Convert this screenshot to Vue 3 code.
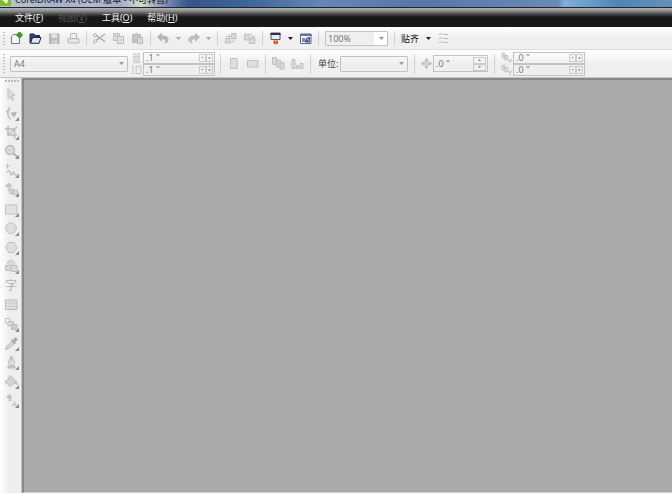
<script setup>
import { ref, h } from 'vue'

const menus = [
  { text: '文件', key: 'F' },
  { text: '视图', key: 'V', off: true },
  { text: '工具', key: 'O' },
  { text: '帮助', key: 'H' }
]

const L = 'fill:none;stroke:#c0c0c0'
const F = 'fill:#d9d9d9;stroke:#c0c0c0'
const S = 'fill:#c4c4c4;stroke:none'
const shapes = {
  new: [['M2.500 5.500l2-2h6v9h-8z', 'fill:#f7f8fc;stroke:#6d738c'], ['M10.500 1v6M7.500 4h6', 'fill:none;stroke:#3f9a1c;stroke-width:2.400'], ['M8.500 2h4v4h-4z', 'fill:#3f9a1c']],
  open: [['M2 12V3h4l1 1.500h4.500V6', 'fill:#39426a;stroke:#1d2547'], ['M2.500 12.300L4.500 6.500h8.500l-2 5.800z', 'fill:#dfe4f4;stroke:#1d2547']],
  save: [['M2.500 3h9.500v9.500H2.500z', 'fill:#bcbcbc;stroke:#b5b5b5'], ['M4.500 3h5.500v4H4.500z', 'fill:#e2e2e2'], ['M5 9.500h5v3H5z', 'fill:#dedede'], ['M6 10h1.500v2.500H6z', S]],
  print: [['M4.500 7V2.500h6V7', 'fill:#eee;stroke:#bdbdbd'], ['M2 7.500h11v4.500H2z', F], ['M3 10h9', 'stroke:#f5f5f5']],
  cut: [['M4 4.500l9 6M4 9.500L13 3', 'fill:none;stroke:#a9a9a9;stroke-width:1.500'], ['M3 2.500a1.600 1.600 0 1 0 .1 0M3 8.800a1.600 1.600 0 1 0 .1 0', 'fill:#eee;stroke:#a9a9a9']],
  copy: [['M2.500 2.500h6v7h-6z', F], ['M6.500 5.500h6v7h-6z', 'fill:#eee;stroke:#b8b8b8'], ['M8 8h3M8 10h3M4 5h2', 'stroke:#bbb']],
  paste: [['M2.500 3.500h8v8h-8z', 'fill:#c4c4c4;stroke:#b8b8b8'], ['M5 2h3v2H5z', S], ['M7.500 6.500h5v6h-5z', 'fill:#e2e2e2;stroke:#b5b5b5'], ['M9 8.500h2M9 10.500h2', 'stroke:#bbb']],
  undo: [['M1 6l5-4.500v3c4 0 7.500 2 6.500 5-.5 1.800-2.500 3-4.500 3.500 2-2 2-4.700-2-4.700v2.700z', 'fill:#b5b5b5']],
  redo: [['M14 6L9 1.500v3C5 4.500 1.500 6.500 2.500 9.500c.5 1.800 2.500 3 4.500 3.500-2-2-2-4.700 2-4.700v2.700z', 'fill:#bdbdbd']],
  import: [['M2.500 7.500h4.500v4.500H2.500z', F], ['M8.500 2.500h4.500v5H8.500z', F], ['M3 5.500h4M5.500 3.500l2 2-2 2M7 11h4V8', L]],
  export: [['M7.500 7.500h5.500v5H7.500z', F], ['M2.500 6V3h3l2 2v4h-5z', F], ['M6 3.500c3-1 5 0 5 3M9 5l2 2 2-2', L]],
  launch: [['M3 2h9v6.500H3z', 'fill:#e9ebf2;stroke:#555b76'], ['M2.500 2h10v2H2.500z', 'fill:#2a3050'], ['M5.500 9.500h4.500v2l-1 2-1.300-1L6.500 13.500l-1-2z', 'fill:#ef3b16'], ['M7 9h1.500v2.500H7z', 'fill:#ffb03b']],
  welcome: [['M2.500 3h10.500v9.500H2.500z', 'fill:#fff;stroke:#5a628a'], ['M2 3h11.500v2H2z', 'fill:#6370a0'], ['M4 7h3.500v4H4z', 'fill:#7d8cc0'], ['M7 10.500l1.500-4L12 6v5.500H7z', 'fill:#46549a'], ['M9 7.500l1.500 2', 'stroke:#fff']],
  options: [['M3 3l1 1 2-2M3 7l1 1 2-2M3 11l1 1 2-2', 'fill:none;stroke:#b8b8b8'], ['M7 3.500h5M7 7.500h5M7 11.500h5', 'stroke:#b8b8b8']],
  portrait: [['M4.500 2.500h6.500v10H4.500z', 'fill:#e0e0e0;stroke:#c0c0c0']],
  landscape: [['M2.500 4.500h10.500v6.500H2.500z', 'fill:#e0e0e0;stroke:#c0c0c0']],
  pages: [['M1.500 1.500h4v7h-4z', F], ['M5.500 4h4v7h-4z', F], ['M9 6.500h4v6.500H9z', F]],
  current: [['M2 3.500h3v9H2z', F], ['M6.500 9.500h2v3h-2z', F], ['M10 7.500h3v5h-3z', F]],
  nudge: [['M7.500 1.500l2 2.500h-4zM7.500 13.500l2-2.500h-4zM1.500 7.500l2.500-2v4zM13.500 7.500l-2.500-2v4z', 'fill:#ccc;stroke:#b0b0b0;stroke-width:.7'], ['M5.500 5.500h4v4h-4z', F]],
  dupx: [['M2 1.500h3.500v6H2z', F], ['M5.500 4.500h3.500v5.500h-3.500z', F], ['M10 9l4 4M14 9l-4 4', 'stroke:#aaa']],
  dupy: [['M2 1.500h3.500v6H2z', F], ['M5.500 4.500h3.500v5.500h-3.500z', F], ['M10 8.500l2 2.500 2-2.500M12 11v3', 'fill:none;stroke:#aaa']],
  width: [['M4 5h7v8H4z', 'fill:#ddd;stroke:#c0c0c0'], ['M4 2.500h7M4 1v3M11 1v3', L]],
  height: [['M7 3h6v9H7z', 'fill:#eee;stroke:#bdbdbd'], ['M3 3v9M1 3h4M1 12h4', L]],
  pick: [['M4 1.500v10l2.300-2 2 4 1.500-.8L8 8.500h3z', 'fill:#dedede;stroke:#bfbfbf']],
  shape: [['M6 1C2.500 5 3 9 6.500 13.500M2 6l4-2', 'fill:none;stroke:#bbb;stroke-width:1.300'], ['M6 7l7-1.500-2.500 6z', 'fill:#b5b5b5']],
  crop: [['M4 1v9h9M1 4h9.500v9M3.500 10.500L13 2', 'fill:none;stroke:#bbb;stroke-width:1.500']],
  zoom: [['M6 1.500a4.500 4.500 0 1 0 .1 0', 'fill:#dcdcdc;stroke:#b8b8b8;stroke-width:1.300'], ['M9.500 9.500l4 3.500', 'stroke:#b0b0b0;stroke-width:2'], ['M4 6h4', 'stroke:#c5c5c5']],
  freehand: [['M3.500 .5v5M1 3h5', L], ['M3 9.500c2-3 3-1 3.500 1s1.500 2 2 0 1.500-2 2 0 1.500 2 3 1', 'fill:none;stroke:#bbb;stroke-width:1.300']],
  smart: [['M1 4l4-3.500L8.500 4 4.500 6z', S], ['M3 8l3-2.500v3z', S], ['M5.500 7h4v4.500h-4zM8 8h5.500v4.500H8z', F]],
  rect: [['M1.500 3h11.500v9H1.500z', 'fill:#e1e1e1;stroke:#c0c0c0']],
  ellipse: [['M7 2a5.300 5.300 0 1 0 .1 0', 'fill:#dedede;stroke:#c0c0c0']],
  polygon: [['M4.500 2.500h5.500l3 5-3 5H4.500l-3-5z', 'fill:#dedede;stroke:#c0c0c0']],
  basic: [['M7 1a3.500 3.500 0 1 0 .1 0', F], ['M1.500 6.500h5v5h-5z', F], ['M7 12.500v-6h6v6z', F]],
  table: [['M1.500 3h11.500v9.500H1.500z', 'fill:#e2e2e2;stroke:#bababa'], ['M1.500 6h11.500M1.500 9.500h11.500M5.500 3v9M9 3v9', 'stroke:#cdcdcd']],
  blend: [['M1.500 1.500h4.500v4.500h-4.500z', L], ['M4 4.500h5.500v4.500H4z', F], ['M7.500 7.500h5.500v5h-5.500z', 'fill:#ccc;stroke:#bbb']],
  dropper: [['M1.500 13.500l1-3 5.500-5 2 2-5.500 5z', 'fill:#dadada;stroke:#b5b5b5'], ['M7 4l1-1 1 1 2.500-3 2.500 2.500L11 6l1 1-1.500 1.500z', 'fill:#a9a9a9']],
  outline: [['M7.500 1l3 5.500-1 4h-4l-1-4z', 'fill:#e3e3e3;stroke:#b8b8b8'], ['M7.500 2v5M4 11h7v2H4z', 'fill:#ccc;stroke:#b8b8b8']],
  fill: [['M1 8l6-5.500 5 5L6.500 12.500z', 'fill:#d6d6d6;stroke:#b8b8b8'], ['M5 6V2.500c1-1.500 2.500-.5 2.500 1', L], ['M11 6c2.500 1 2.500 2.500 2.500 5l-2.500-1z', S]],
  interactive: [['M2 3.500L5.500 1 8.500 5l-3 2z', S], ['M3.500 8l3-2 1.500 2z', S], ['M10.500 7.500l3 5.500H7.500z', 'fill:#cfcfcf']]
}

const Icon = (p) =>
  h('svg', { viewBox: '0 0 15 15', 'aria-hidden': 'true' }, shapes[p.name].map(([d, style]) => h('path', { d, style })))
Icon.props = ['name']

const toolbar = [
  { n: 'new', t: 'New' }, { n: 'open', t: 'Open' }, { n: 'save', t: 'Save' }, { n: 'print', t: 'Print' }, '|',
  { n: 'cut', t: 'Cut' }, { n: 'copy', t: 'Copy' }, { n: 'paste', t: 'Paste' }, '|',
  { n: 'undo', t: 'Undo', drop: true, off: true }, { n: 'redo', t: 'Redo', drop: true, off: true }, '|',
  { n: 'import', t: 'Import' }, { n: 'export', t: 'Export' }, '|',
  { n: 'launch', t: 'Application launcher', drop: true }, { n: 'welcome', t: 'Welcome screen' }, '|'
]

const toolGroups = [
  ['pick', 'shape', 'crop', 'zoom', 'freehand', 'smart'],
  ['rect', 'ellipse', 'polygon', 'basic', 'text', 'table'],
  ['blend', 'dropper', 'outline', 'fill', 'interactive']
]
const plain = ['pick', 'text', 'table']

const zoomLevel = ref('100%')
const paper = ref('A4')
const unit = ref('')
const pageW = ref('.1 "')
const pageH = ref('.1 "')
const nudge = ref('.0 "')
const dupX = ref('.0 "')
const dupY = ref('.0 "')
</script>

<template>
  <div class="app">
    <header class="title">
      <svg class="logo" viewBox="0 0 12 7" aria-hidden="true">
        <path d="M0 0h11v6H0z" fill="#7cbb2e" />
        <path d="M2 0l5 4 1-4z" fill="#f4f9ec" />
      </svg>
      <span>CorelDRAW X4 (OEM 版本 - 不可转售)</span>
    </header>

    <nav class="menu">
      <button v-for="m in menus" :key="m.text" type="button" :disabled="m.off">{{ m.text }}(<u>{{ m.key }}</u>)</button>
    </nav>

    <div class="bar standard">
      <i class="grip"></i>
      <template v-for="(b, i) in toolbar" :key="i">
        <i v-if="b === '|'" class="sep"></i>
        <template v-else>
          <button type="button" class="ico" :aria-label="b.t"><Icon :name="b.n" /></button>
          <button v-if="b.drop" type="button" class="drop" :class="{ off: b.off }" :aria-label="b.t + ' list'"></button>
        </template>
      </template>
      <label class="combo zoom">
        <select v-model="zoomLevel" aria-label="Zoom"><option>100%</option></select><i class="tri"></i>
      </label>
      <i class="sep"></i>
      <button type="button" class="snap">贴齐</button>
      <button type="button" class="drop" aria-label="Snap list"></button>
      <button type="button" class="ico" aria-label="Options"><Icon name="options" /></button>
    </div>

    <div class="bar property">
      <i class="grip"></i>
      <label class="combo paper">
        <select v-model="paper" aria-label="Paper"><option>A4</option></select><i class="tri"></i>
      </label>
      <div class="pair">
        <label class="field"><Icon name="width" /><span class="num"><input v-model="pageW" aria-label="Page width"><button type="button" class="down" aria-label="Less"></button><button type="button" class="up" aria-label="More"></button></span></label>
        <label class="field"><Icon name="height" /><span class="num"><input v-model="pageH" aria-label="Page height"><button type="button" class="down" aria-label="Less"></button><button type="button" class="up" aria-label="More"></button></span></label>
      </div>
      <i class="sep"></i>
      <button type="button" class="ico" aria-label="Portrait"><Icon name="portrait" /></button>
      <button type="button" class="ico" aria-label="Landscape"><Icon name="landscape" /></button>
      <i class="sep"></i>
      <button type="button" class="ico" aria-label="All pages"><Icon name="pages" /></button>
      <button type="button" class="ico" aria-label="Current page"><Icon name="current" /></button>
      <i class="sep"></i>
      <label class="unit" for="unit">单位:</label>
      <span class="combo units">
        <select id="unit" v-model="unit"><option></option></select><i class="tri"></i>
      </span>
      <i class="sep"></i>
      <label class="field nudge"><Icon name="nudge" /><span class="num tall"><input v-model="nudge" aria-label="Nudge"><span class="spin"><button type="button" class="up" aria-label="More"></button><button type="button" class="down" aria-label="Less"></button></span></span></label>
      <i class="sep"></i>
      <div class="pair">
        <label class="field"><Icon name="dupx" /><span class="num"><input v-model="dupX" aria-label="Duplicate x"><button type="button" class="down" aria-label="Less"></button><button type="button" class="up" aria-label="More"></button></span></label>
        <label class="field"><Icon name="dupy" /><span class="num"><input v-model="dupY" aria-label="Duplicate y"><button type="button" class="down" aria-label="Less"></button><button type="button" class="up" aria-label="More"></button></span></label>
      </div>
    </div>

    <div class="work">
      <aside class="tools">
        <i class="hgrip"></i>
        <div v-for="(g, i) in toolGroups" :key="i" class="group">
          <button v-for="t in g" :key="t" type="button" :class="{ fly: !plain.includes(t) }" :aria-label="t">
            <span v-if="t === 'text'" class="char">字</span>
            <Icon v-else :name="t" />
          </button>
        </div>
      </aside>
      <main class="canvas"></main>
    </div>
  </div>
</template>

<style>
body { margin: 0; background: #fff; }
</style>

<style scoped>
.app {
  display: flex;
  flex-direction: column;
  height: 100vh;
  box-sizing: border-box;
  padding-bottom: 3px;
  font-family: "Noto Sans", "Noto Sans CJK SC", sans-serif;
  font-size: 9px;
  color: #222;
}
button, input, select { font: inherit; color: inherit; margin: 0; padding: 0; border: 0; background: none; outline: 0; box-sizing: border-box; }
svg { display: block; width: 15px; height: 15px; flex: none; }

.title {
  display: flex;
  align-items: flex-end;
  gap: 3px;
  height: 7px;
  flex: none;
  overflow: hidden;
  border-bottom: 1px solid #20242c;
  background: linear-gradient(90deg, #b9c8c8 0, #a5b2cb 8%, #b2b8cf 14%, #a3acc6 18%, #d5dec4 21%, #8d99bd 24%, #35558b 28%, #3c6396 36%, #6487b5 48%, #5578a5 62%, #6c87b4 82%, #6c87b4 83%, #7fb0d8 84%, #4f86b4 92%, #6691b8 100%);
  color: #15181e;
  font-size: 9px;
  line-height: 10px;
}
.title .logo { width: 12px; height: 7px; }
.title span { white-space: nowrap; padding-bottom: 2px; }

.menu {
  display: flex;
  gap: 15px;
  height: 19px;
  flex: none;
  padding-left: 15px;
  background: linear-gradient(#b5b5b5 0, #8c8c8c 3px, #4a4a4a 6px, #181818 9px, #181818 100%);
  color: #f2f2f2;
}
.menu button { line-height: 19px; white-space: nowrap; }
.menu button:disabled { color: #555; }

.bar { display: flex; align-items: center; flex: none; box-sizing: border-box; background: linear-gradient(#fff, #efefef 50%, #efefef); }
.standard { height: 23px; padding-top: 1px; border-bottom: 1px solid #ddd; }
.property { height: 28px; border-bottom: 1px solid #c4c4c4; color: #777; }
.grip { width: 2px; height: 14px; margin: 0 2px 0 3px; background: repeating-linear-gradient(#bbb 0 1px, transparent 1px 3px); }
.property .grip { height: 20px; margin-right: 5px; }
.sep { width: 1px; height: 15px; margin: 0 3px; background: #d2d2d2; flex: none; }
.property .sep { height: 20px; }
.ico { display: grid; place-items: center; width: 19px; height: 19px; flex: none; }
.drop { width: 11px; height: 19px; display: grid; place-items: center; flex: none; }
.drop::before, .tri { content: ""; width: 5px; height: 3px; background: #222; clip-path: polygon(0 0, 100% 0, 50% 100%); }
.drop.off::before { background: #aaa; }
.snap { padding-left: 3px; width: 25px; text-align: left; white-space: nowrap; flex: none; color: #111; }

.combo { display: grid; grid-template-columns: 1fr 11px; align-items: center; justify-items: center; height: 16px; box-sizing: border-box; border: 1px solid #c2c2c2; border-radius: 1px; flex: none; }
.combo select { grid-area: 1 / 1 / 2 / 3; width: 100%; height: 14px; appearance: none; padding-left: 3px; }
.combo .tri { grid-area: 1 / 2; background: #999; pointer-events: none; }
.zoom { width: 63px; height: 15px; margin: 0 3px; background: #fff; color: #777; }
.zoom select { height: 13px; padding-left: 2px; background: linear-gradient(90deg, #efefef 0 48px, #fff 48px); }
.paper { width: 118px; margin-right: 2px; }
.units { width: 68px; margin-right: 3px; }
.unit { color: #444; white-space: nowrap; width: 20px; margin: 0 2px 0 4px; flex: none; }

.pair { display: grid; margin: 0 2px 0 2px; }
.paper + .pair { margin-left: 0; }
.field { display: flex; align-items: center; }
.field svg { width: 13px; height: 12px; }
.num { display: flex; align-items: center; width: 72px; height: 12px; box-sizing: border-box; border: 1px solid #c2c2c2; padding-right: 1px; }
.num input { flex: 1; min-width: 0; height: 10px; line-height: 10px; padding-left: 2px; }
.num button { width: 7px; height: 8px; border: 1px solid #ccc; display: grid; place-items: center; }
.num button::before { content: ""; width: 3px; height: 2px; background: #888; }
.num .up::before { clip-path: polygon(50% 0, 100% 100%, 0 100%); }
.num .down::before { clip-path: polygon(0 0, 100% 0, 50% 100%); }
.num.tall { width: 55px; height: 17px; }
.nudge { margin: 0 3px 0 2px; }
.nudge svg { width: 13px; height: 13px; }
.spin { display: grid; }
.spin button { width: 13px; height: 7px; }

.work { display: flex; flex: 1; min-height: 0; }
.tools { width: 22px; box-sizing: border-box; padding: 2px 0 0 2px; flex: none; background: linear-gradient(90deg, #fff, #eee 9px, #eee); }
.hgrip { display: block; width: 14px; height: 2px; margin: 0 0 3px 3px; background: repeating-linear-gradient(90deg, #bbb 0 2px, transparent 2px 3px); }
.group { display: grid; margin-bottom: 1px; }
.group button { position: relative; width: 18px; height: 19px; display: grid; place-items: center; }
.fly::after { content: ""; position: absolute; right: 1px; bottom: 2px; width: 4px; height: 4px; background: #888; clip-path: polygon(100% 0, 100% 100%, 0 100%); }
.char { font-size: 12px; line-height: 19px; color: #b0b0b0; }
.canvas { flex: 1; background: #aaa; border: solid #888; border-width: 2px 0 0 2px; border-bottom: 1px solid #ccc; box-shadow: -1px 0 #c6c6c6; }
</style>
